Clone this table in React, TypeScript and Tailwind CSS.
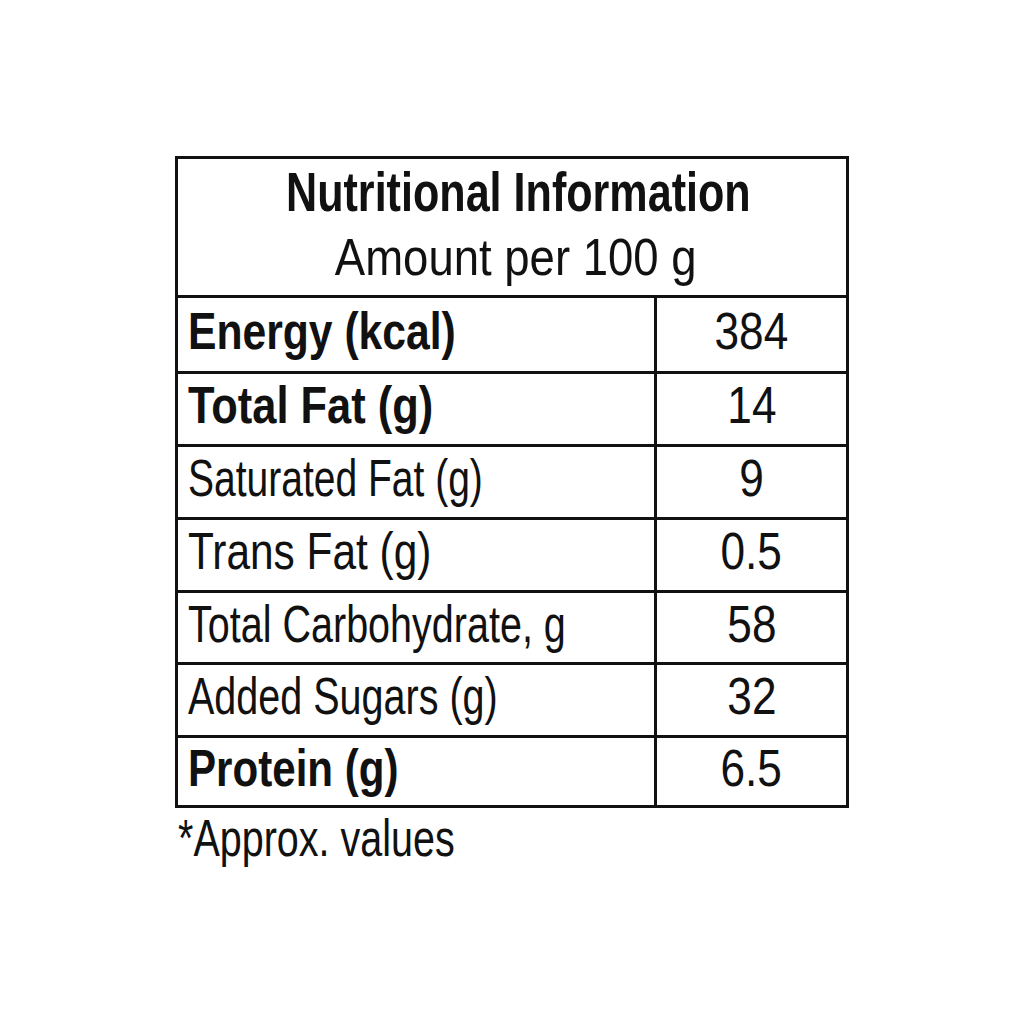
import React from "react";

// heights from line to line, border included; scale fits each label's width
const rows = [
  { label: "Energy (kcal)", value: "384", bold: true, h: "h-[76px]", sx: "scale-x-[0.82]" },
  { label: "Total Fat (g)", value: "14", bold: true, h: "h-[73px]", sx: "scale-x-[0.835]" },
  { label: "Saturated Fat (g)", value: "9", bold: false, h: "h-[73px]", sx: "scale-x-[0.75]" },
  { label: "Trans Fat (g)", value: "0.5", bold: false, h: "h-[73px]", sx: "scale-x-[0.815]" },
  { label: "Total Carbohydrate, g", value: "58", bold: false, h: "h-[72px]", sx: "scale-x-[0.76]" },
  { label: "Added Sugars (g)", value: "32", bold: false, h: "h-[73px]", sx: "scale-x-[0.76]" },
  { label: "Protein (g)", value: "6.5", bold: true, h: "h-[70px]", sx: "scale-x-[0.81]" },
];

const App = () => {
  return (
    <div className="w-[1024px] h-[1024px] bg-white text-[#111] font-['Liberation_Sans',Arial,sans-serif]">
      <div className="pt-[156px] pl-[175px]">
        {/* Table */}
        <div className="w-[674px] border-[3px] border-[#111]">
          {/* Header */}
          <div className="h-[136px] flex flex-col items-center">
            <span className="inline-block ml-[12px] text-[55px] leading-[66px] font-bold scale-x-[0.784] whitespace-nowrap">
              Nutritional Information
            </span>
            <span className="inline-block ml-[8px] text-[52px] leading-[64px] scale-x-[0.875] whitespace-nowrap">
              Amount per 100 g
            </span>
          </div>
          {/* Rows */}
          {rows.map((row, index) => (
            <div
              key={index}
              className={`grid grid-cols-[479px_1fr] border-t-[3px] border-[#111] ${row.h}`}
            >
              <div className="flex items-center pl-[10px] pb-[8px] border-r-[3px] border-[#111]">
                <span
                  className={`inline-block text-[52px] leading-none origin-left whitespace-nowrap ${
                    row.bold ? "font-bold" : ""
                  } ${row.sx}`}
                >
                  {row.label}
                </span>
              </div>
              <div className="flex items-center justify-center pb-[8px]">
                <span className="inline-block text-[52px] leading-none scale-x-[0.85]">
                  {row.value}
                </span>
              </div>
            </div>
          ))}
        </div>
        {/* Footnote */}
        <div className="pl-[3px]">
          <span className="inline-block text-[52px] leading-[60px] scale-x-[0.76] origin-left whitespace-nowrap">
            *Approx. values
          </span>
        </div>
      </div>
    </div>
  );
};

export default App;
